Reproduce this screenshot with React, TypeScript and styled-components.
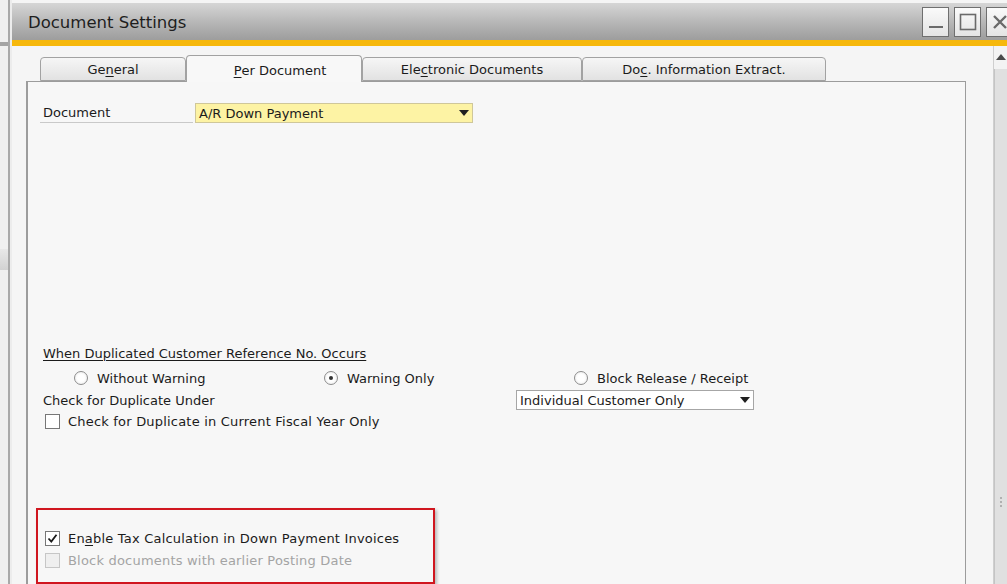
import * as React from "react";
import styled, { createGlobalStyle } from "styled-components";

const GlobalStyle = createGlobalStyle`
  html, body {
    margin: 0;
    padding: 0;
    background: #f1f1f1;
    overflow: hidden;
  }
  #root {
    width: 1007px;
    height: 584px;
  }
`;

const Screen = styled.div`
  display: flex;
  width: 1007px;
  height: 584px;
  overflow: hidden;
  font-family: "DejaVu Sans", "Liberation Sans", sans-serif;
  font-size: 13px;
  color: #1b1b1b;
`;

// the app window behind the dialog, only a sliver is visible
const BackStrip = styled.div`
  width: 8px;
  flex-shrink: 0;
  background: #f0f0f0;
  border-right: 2px solid #a9a9a9;
  display: flex;
  flex-direction: column;
`;

const BackBar = styled.div<{ top: number; h: number; shade: string }>`
  margin-top: ${({ top }) => top}px;
  height: ${({ h }) => h}px;
  background: ${({ shade }) => shade};
`;

const Window = styled.div`
  flex: 1;
  display: flex;
  flex-direction: column;
  border-left: 2px solid #ececec;
  background: #f5f5f5;
  padding-top: 3px;
  min-width: 0;
`;

const TitleBar = styled.div`
  height: 37px;
  flex-shrink: 0;
  display: flex;
  align-items: center;
  justify-content: space-between;
  padding-left: 16px;
  background: linear-gradient(#d6d6d6, #b5b5b5 55%, #9d9d9d);
`;

const Title = styled.div`
  font-size: 16.5px;
  color: #1e1e1e;
  margin-top: 2px;
`;

const WinButtons = styled.div`
  display: flex;
  gap: 5px;
  margin-right: -6px;
`;

const WinButton = styled.div`
  width: 27px;
  height: 30px;
  box-sizing: border-box;
  border: 1px solid #6f6f6f;
  background: linear-gradient(#fafafa, #e4e4e4);
  display: flex;
  align-items: center;
  justify-content: center;
`;

const YellowLine = styled.div`
  height: 6px;
  flex-shrink: 0;
  background: #f6b80c;
`;

const Body = styled.div`
  flex: 1;
  display: flex;
  min-height: 0;
`;

const Content = styled.div`
  flex: 1;
  display: flex;
  flex-direction: column;
  padding-left: 14px;
  padding-right: 27px;
  min-width: 0;
`;

const TabRow = styled.div`
  display: flex;
  align-items: flex-end;
  height: 35px;
  padding-left: 14px;
  flex-shrink: 0;
`;

const Tab = styled.div<{ w: number; active?: boolean }>`
  width: ${({ w }) => w}px;
  height: ${({ active }) => (active ? 27 : 24)}px;
  margin-bottom: ${({ active }) => (active ? -1 : 0)}px;
  position: relative;
  z-index: ${({ active }) => (active ? 1 : 0)};
  box-sizing: border-box;
  border: 1px solid #a2a2a2;
  border-bottom: ${({ active }) => (active ? "none" : "1px solid #a2a2a2")};
  border-radius: 4px 4px 0 0;
  background: ${({ active }) =>
    active ? "#f8f8f8" : "linear-gradient(#f6f6f6, #e2e2e2)"};
  display: flex;
  align-items: center;
  justify-content: center;
  padding-top: ${({ active }) => (active ? 2 : 1)}px;
  padding-left: ${({ active }) => (active ? 12 : 0)}px;
  color: #1b1b1b;
`;

const Key = styled.span`
  text-decoration: underline;
  text-underline-offset: 2px;
`;

const Panel = styled.div`
  flex: 1;
  margin-bottom: -20px;
  border: 1px solid #9c9c9c;
  border-left: 2px solid #9c9c9c;
  background: #f7f7f7;
  display: flex;
  flex-direction: column;
  padding-left: 15px;
`;

const DocRow = styled.div`
  display: flex;
  align-items: flex-end;
  margin-top: 21px;
  margin-left: -3px;
  height: 20px;
`;

const DocLabel = styled.div`
  width: 153px;
  height: 20px;
  box-sizing: border-box;
  padding-left: 3px;
  border-bottom: 1px solid #c9c9c9;
  display: flex;
  align-items: center;
`;

const Select = styled.div<{ w: number; yellow?: boolean }>`
  width: ${({ w }) => w}px;
  height: 20px;
  box-sizing: border-box;
  margin-left: 2px;
  border: 1px solid ${({ yellow }) => (yellow ? "#cfc79a" : "#a6a6a6")};
  background: ${({ yellow }) => (yellow ? "#fdf3a4" : "#ffffff")};
  display: flex;
  align-items: center;
  justify-content: space-between;
  padding: 0 3px 0 3px;
`;

const Arrow = styled.div`
  width: 0;
  height: 0;
  border-left: 5px solid transparent;
  border-right: 5px solid transparent;
  border-top: 6px solid #202020;
`;

const SectionTitle = styled.div`
  margin-top: 222px;
  height: 18px;
  line-height: 18px;
  text-decoration: underline;
  text-underline-offset: 2px;
`;

const RadioRow = styled.div`
  display: flex;
  margin-top: 6px;
  padding-left: 31px;
  height: 18px;
`;

const RadioOption = styled.div`
  width: 250px;
  display: flex;
  align-items: center;
  gap: 9px;
`;

const RadioCircle = styled.div<{ checked?: boolean }>`
  width: 14px;
  height: 14px;
  box-sizing: border-box;
  border-radius: 50%;
  border: 1px solid #8d8d8d;
  background: radial-gradient(#ffffff 40%, #e6e6e6);
  display: flex;
  align-items: center;
  justify-content: center;

  &::after {
    content: "";
    width: 4px;
    height: 4px;
    border-radius: 50%;
    background: ${({ checked }) => (checked ? "#333" : "transparent")};
  }
`;

const UnderRow = styled.div`
  display: flex;
  align-items: center;
  justify-content: space-between;
  width: 711px;
  margin-top: 3px;
  height: 20px;
`;

const CheckRow = styled.div<{ disabled?: boolean }>`
  display: flex;
  align-items: center;
  gap: 8px;
  height: 22px;
  letter-spacing: 0.2px;
  color: ${({ disabled }) => (disabled ? "#a4a4a4" : "#1b1b1b")};
`;

const CheckBox = styled.div<{ disabled?: boolean }>`
  width: 15px;
  height: 15px;
  margin-left: 2px;
  box-sizing: border-box;
  border: 1px solid ${({ disabled }) => (disabled ? "#c6c6c6" : "#777")};
  background: ${({ disabled }) => (disabled ? "#efefef" : "#fff")};
  display: flex;
  align-items: center;
  justify-content: center;
`;

const Highlight = styled.div`
  margin-top: 76px;
  margin-left: -7px;
  width: 399px;
  height: 76px;
  box-sizing: border-box;
  border: 2px solid #d0161f;
  box-shadow: 2px 2px 3px rgba(0, 0, 0, 0.25);
  padding: 17px 0 0 5px;
  display: flex;
  flex-direction: column;
`;

const ScrollBar = styled.div`
  width: 13px;
  flex-shrink: 0;
  display: flex;
  flex-direction: column;
  border-left: 1px solid #cfcfcf;
`;

const ScrollUp = styled.div`
  height: 23px;
  background: #f3f3f3;
  display: flex;
  justify-content: center;
  padding-top: 8px;
  box-sizing: border-box;

  &::before {
    content: "";
    width: 0;
    height: 0;
    border-left: 5px solid transparent;
    border-right: 5px solid transparent;
    border-bottom: 6px solid #4a4a4a;
  }
`;

const ScrollTrack = styled.div`
  flex: 1;
  background: #e0e0e0;
  border-left: 1px solid #c4c4c4;
  display: flex;
  flex-direction: column;
  align-items: center;
`;

const Grip = styled.div`
  margin-top: 428px;
  width: 2px;
  height: 12px;
  background: repeating-linear-gradient(#b0b0b0 0 2px, transparent 2px 4px);
`;

const Tick = () => (
  <svg width="11" height="11" viewBox="0 0 11 11">
    <path d="M1.5 5.5 L4.3 8.5 L9.5 1.8" stroke="#1a1a1a" strokeWidth="1.8" fill="none" />
  </svg>
);

const App = (): JSX.Element => {
  return (
    <>
      <GlobalStyle />
      <Screen>
        <BackStrip>
          <BackBar top={42} h={4} shade="#a4a4a4" />
          <BackBar top={203} h={21} shade="linear-gradient(#e8e8e8, #d2d2d2)" />
        </BackStrip>
        <Window>
          <TitleBar>
            <Title>Document Settings</Title>
            <WinButtons>
              <WinButton>
                <svg width="16" height="16" viewBox="0 0 16 16">
                  <rect x="1" y="12" width="14" height="2" fill="#6a6a6a" />
                </svg>
              </WinButton>
              <WinButton>
                <svg width="18" height="18" viewBox="0 0 18 18">
                  <rect x="1.5" y="1.5" width="15" height="15" fill="none" stroke="#6a6a6a" strokeWidth="1.6" />
                </svg>
              </WinButton>
              <WinButton>
                <svg width="16" height="16" viewBox="0 0 16 16">
                  <path d="M2 2 L14 14 M14 2 L2 14" stroke="#6a6a6a" strokeWidth="2.4" />
                </svg>
              </WinButton>
            </WinButtons>
          </TitleBar>
          <YellowLine />
          <Body>
            <Content>
              <TabRow>
                <Tab w={146}>
                  Ge<Key>n</Key>eral
                </Tab>
                <Tab w={176} active>
                  <Key>P</Key>er Document
                </Tab>
                <Tab w={220}>
                  Ele<Key>c</Key>tronic Documents
                </Tab>
                <Tab w={244}>
                  Do<Key>c</Key>. Information Extract.
                </Tab>
              </TabRow>
              <Panel>
                <DocRow>
                  <DocLabel>Document</DocLabel>
                  <Select w={278} yellow>
                    A/R Down Payment
                    <Arrow />
                  </Select>
                </DocRow>

                <SectionTitle>When Duplicated Customer Reference No. Occurs</SectionTitle>
                <RadioRow>
                  <RadioOption>
                    <RadioCircle />
                    Without Warning
                  </RadioOption>
                  <RadioOption>
                    <RadioCircle checked />
                    Warning Only
                  </RadioOption>
                  <RadioOption>
                    <RadioCircle />
                    Block Release / Receipt
                  </RadioOption>
                </RadioRow>
                <UnderRow>
                  Check for Duplicate Under
                  <Select w={238}>
                    Individual Customer Only
                    <Arrow />
                  </Select>
                </UnderRow>
                <CheckRow>
                  <CheckBox />
                  Check for Duplicate in Current Fiscal Year Only
                </CheckRow>

                <Highlight>
                  <CheckRow>
                    <CheckBox>
                      <Tick />
                    </CheckBox>
                    <span>
                      En<Key>a</Key>ble Tax Calculation in Down Payment Invoices
                    </span>
                  </CheckRow>
                  <CheckRow disabled>
                    <CheckBox disabled />
                    Block documents with earlier Posting Date
                  </CheckRow>
                </Highlight>
              </Panel>
            </Content>
            <ScrollBar>
              <ScrollUp />
              <ScrollTrack>
                <Grip />
              </ScrollTrack>
            </ScrollBar>
          </Body>
        </Window>
      </Screen>
    </>
  );
};

export default App;
